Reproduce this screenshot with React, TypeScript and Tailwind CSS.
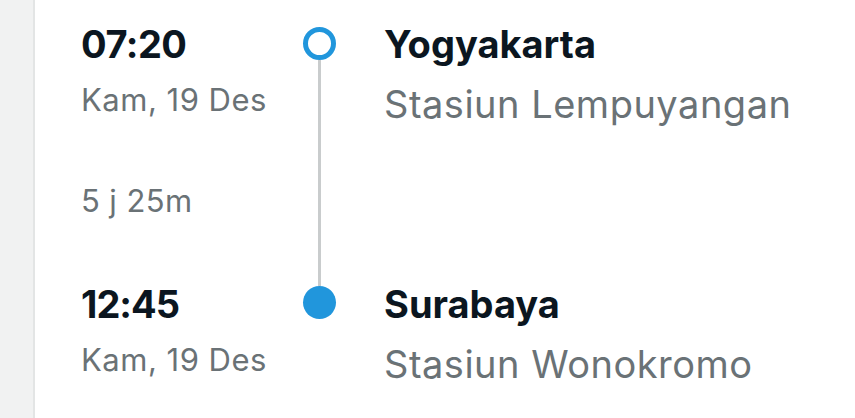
import React from 'react';

const font = { fontFamily: 'Inter, "Noto Sans", sans-serif' };

export default function App() {
  return (
    <div className="flex h-[418px] w-[855px] overflow-hidden bg-white" style={font}>
      {/* Side strip */}
      <div className="w-[35px] shrink-0 border-r-2 border-[#e3e5e5] bg-[#f1f2f2]" />

      <div className="flex pl-[46px]">
        {/* Times */}
        <div className="flex w-[222px] flex-col pt-[25px]">
          <div className="text-[38px] leading-none font-bold tracking-[-0.5px] text-[#0b1620]">07:20</div>
          <div className="mt-[21px] text-[31px] leading-none tracking-[0.5px] text-[#6a7276]">Kam, 19 Des</div>
          <div className="mt-[70px] text-[31px] leading-none tracking-[0.4px] text-[#6a7276]">5 j 25m</div>
          <div className="mt-[69px] text-[38px] leading-none font-bold tracking-[-1px] text-[#0b1620]">12:45</div>
          <div className="mt-[21px] text-[31px] leading-none tracking-[0.5px] text-[#6a7276]">Kam, 19 Des</div>
        </div>

        {/* Timeline */}
        <div className="flex w-[33px] flex-col items-center pt-[27px]">
          <div className="h-[33px] w-[33px] rounded-full border-[5px] border-[#2196dc] bg-white" />
          <div className="h-[226px] w-[3px] bg-[#c9cccd]" />
          <div className="h-[33px] w-[33px] rounded-full bg-[#2196dc]" />
        </div>

        {/* Stations */}
        <div className="flex flex-col pt-[25px] pl-[48px]">
          <div className="text-[38px] leading-none font-bold text-[#0b1620]">Yogyakarta</div>
          <div className="mt-[22px] text-[38px] leading-none tracking-[0.5px] text-[#6a7276]">Stasiun Lempuyangan</div>
          <div className="mt-[162px] text-[38px] leading-none font-bold text-[#0b1620]">Surabaya</div>
          <div className="mt-[22px] text-[38px] leading-none tracking-[0.5px] text-[#6a7276]">Stasiun Wonokromo</div>
        </div>
      </div>
    </div>
  );
}
